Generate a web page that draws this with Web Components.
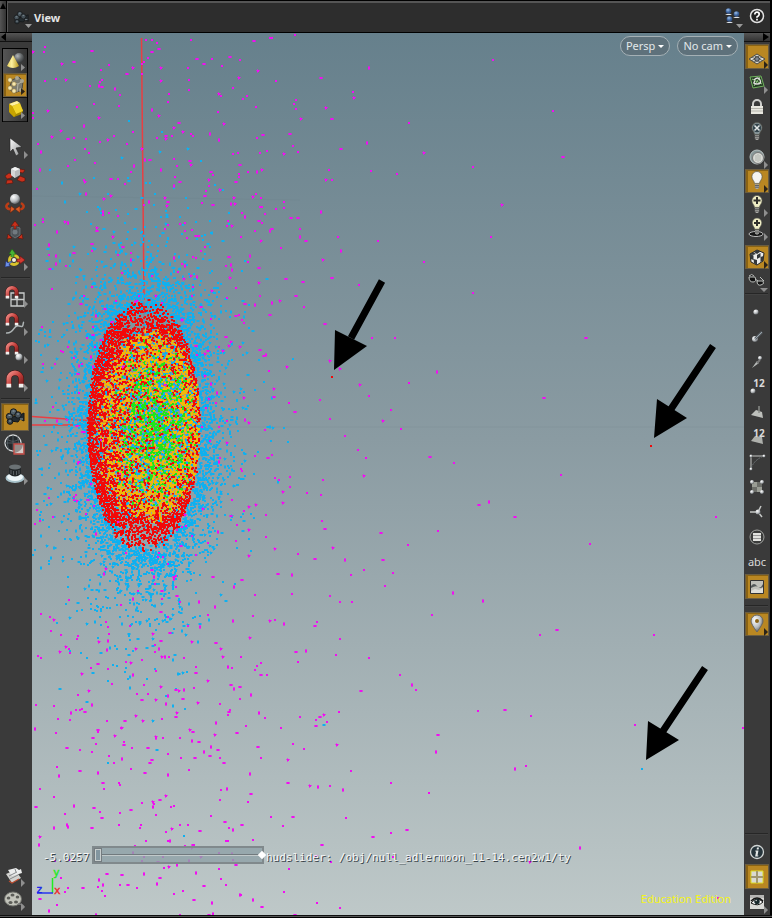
<!DOCTYPE html>
<html lang="en">
<head>
<meta charset="utf-8">
<title>Scene View</title>
<style>
html,body{margin:0;height:100%;background:#000}
body{font-family:"Noto Sans","Open Sans",sans-serif;overflow:hidden}
</style>
</head>
<body>
<scene-pane></scene-pane>
<script>
const DEFS = `<defs>
<radialGradient id="ball" cx=".35" cy=".3" r=".8"><stop offset="0" stop-color="#fff"/><stop offset=".55" stop-color="#b9bdc0"/><stop offset="1" stop-color="#45484b"/></radialGradient>
<radialGradient id="dark" cx=".35" cy=".3" r=".8"><stop offset="0" stop-color="#b0b4b6"/><stop offset=".5" stop-color="#65696b"/><stop offset="1" stop-color="#2b2e30"/></radialGradient>
<radialGradient id="blue" cx=".4" cy=".3" r=".8"><stop offset="0" stop-color="#9fc0e8"/><stop offset=".5" stop-color="#3f66a0"/><stop offset="1" stop-color="#1d3768"/></radialGradient>
<linearGradient id="gold"><stop offset="0" stop-color="#e6cf5a"/><stop offset=".4" stop-color="#fdf0a0"/><stop offset="1" stop-color="#b99718"/></linearGradient>
<linearGradient id="steel" x2="1" y2="1"><stop offset="0" stop-color="#fff"/><stop offset="1" stop-color="#8b8d8e"/></linearGradient>
<linearGradient id="mag" x2="1" y2="1"><stop offset="0" stop-color="#ef8a84"/><stop offset=".5" stop-color="#c5403c"/><stop offset="1" stop-color="#7d1c1b"/></linearGradient>
</defs>`;
const magnet = (x, y, s) => `<g transform="translate(${x} ${y}) scale(${s})"><path d="M-6.500 6V-1a6.500 6.500 0 0 1 13 0V6" fill="none" stroke="#3a0f0e" stroke-width="6"/><path d="M-6.500 6V-1a6.500 6.500 0 0 1 13 0V6" fill="none" stroke="url(#mag)" stroke-width="5"/><path d="M-9 4h5v4h-5zM4 4h5v4h-5z" fill="#f0f0ee"/></g>`;
const camera = `<g stroke="#14181a" stroke-width="1"><path d="M-3 0l5-1 3-1 4-2v8l-4-2-2 3-7-1z" fill="#232b30"/><circle cx="-5.500" cy="-.5" r="3.200" fill="#4b5860"/><circle cx="-1.500" cy="-5" r="3.200" fill="#526069"/><circle cx="3" cy="-2" r="3.200" fill="#46525a"/><circle cx="-5" cy="4.500" r="2.800" fill="#39454d"/></g><path d="M-6.500-1.500h2M-2.500-6h2M2-3h2M5 2h3M-6 4h2" stroke="#93a1aa"/>`;
const bulb = (x, y, s, fill = '#f4f4f0') => `<g transform="translate(${x} ${y}) scale(${s})"><path d="M-3 4C-3 1-6 0-6-4a6 6 0 0 1 12 0c0 4-3 5-3 8z" fill="${fill}" stroke="#55554d" stroke-width=".8"/><path d="M-2.500 5h5v4l-1.500 1.500h-2L-2.500 9z" fill="#a9a9a5"/><path d="M-2.500 6.500h5M-2.500 8.500h5" stroke="#555"/></g>`;
const redArrows = `<g fill="#c9301b" stroke="#54150d" stroke-width=".6">`;
const dot = (x, y, r = 2) => `<circle cx="${x}" cy="${y}" r="${r}" fill="url(#ball)"/>`;
const ICONS = {
 objects: `<circle cx="4" cy="-3" r="5" fill="url(#dark)"/><path d="M-2-6L4 5Q-2 9-8 5z" fill="url(#gold)"/>`,
 points: `<path d="M-3-5L4-8 8-4 7 5-1 8-6 4z" fill="#7d7c70" stroke="#4c4b45"/><path d="M-3-3l6 2 5-3M3-1l-1 8" stroke="#b4b3a4" fill="none"/><g fill="#f5e7ae" stroke="#8d7437" stroke-width=".6"><circle cx="-5" cy="-5" r="2.200"/><circle cx="-1" cy="-1" r="2.200"/><circle cx="-5" cy="3" r="2.200"/><circle cx="-1" cy="6" r="2.200"/></g><g fill="#aaa692"><circle cx="2" cy="-7" r="2"/><circle cx="7" cy="-4" r="2"/><circle cx="6" cy="5" r="2"/></g>`,
 prims: `<path d="M-6-5L2-8 8 1 7 5-1 8-5 4z" fill="#a68a00"/><path d="M-3-3l8-3 3 8-7 3z" fill="#f2d52a"/><path d="M-6-5L2-8l3 2-8 3z" fill="#fff2a0"/><path d="M-6-5l3 2 4 8-2 3-5-5z" fill="#c8a400"/>`,
 select: `<path d="M-5-9V5l3-3 3 7 3-2-3-6 6-1z" fill="url(#steel)" stroke="#222" stroke-width=".6"/>`,
 move: redArrows + `<path d="M-10 1l4-3 4 2-2 3-4 1zM10-5L5-6 3-3l5 1zM-8 5l-1 4 7-1-1-3zM10 3L5 1 2 5l5 2 3-1z"/></g><path d="M-4-6l4-2 5 2v6L0 3l-4-3z" fill="#b8babc"/><path d="M-4-6l4-2 5 2-5 2z" fill="#f2f3f3"/><path d="M0-4v7l-4-3v-6z" fill="#d3d5d6"/>`,
 rotate: `<path d="M-6 0c-5 3-2 7 3 6M6 0c5 3 2 7-2 6" fill="none" stroke="#bd3d16" stroke-width="2.500"/><path d="M-4 3l4 3-5 4zM5 3L0 6l5 4z" fill="#d95b24" stroke="#58180b" stroke-width=".5"/><circle cy="-4" r="5" fill="url(#ball)"/>`,
 scale: `<path d="M-4-3l4-2 5 2v7L0 7l-4-3z" fill="#4d5358" stroke="#777d81" stroke-width=".7"/><circle cy="1" r="2.500" fill="#727a80"/>` + redArrows + `<path d="M0-10l4 5H1v3h-2v-3h-3zM-8 8l1-5 4 4zM8 8L7 3 3 7z"/></g>`,
 pose: `<circle cx="-1" cy="1" r="4.500" fill="none" stroke="#d9c32b" stroke-width="3"/><circle cx="-1" cy="1" r="2" fill="#f2efe0"/><path d="M-4-2v-3h-2l3-5 4 5h-2v3" fill="#49b435" stroke="#1c5a13" stroke-width=".6"/><path d="M2 0h3v-3l5 4-5 4V3H2z" fill="#d33a31" stroke="#611" stroke-width=".6"/><path d="M-3 3l-3 2 1 2-5 1 1-6 2 2 3-2z" fill="#6c90e8" stroke="#237" stroke-width=".6"/>`,
 snapgrid: `<path d="M-4-3H9V10H-4zM2-3v13M-4 3.500H9" fill="none" stroke="#c9cccb" stroke-width="1.300"/>` + magnet(-3, -3, .7),
 snapcurve: `<path d="M-9 9C0 10-2 0 4 2S7-1 9-2" fill="none" stroke="#aeb4b5" stroke-width="1.500"/>` + magnet(-3, -4, .7),
 snappoint: magnet(-3, -3, .7) + dot(4, 5, 3.500),
 snap: magnet(0, 0, .95),
 camera: camera,
 wireball: `<circle cx="-2" cy="-2" r="8" fill="#23282b" stroke="#d5d8d9" stroke-width="1.300"/><path d="M-10-2H6M-2-10V6M-8-6c4 3 8 3 12 0M-6-9c-2 5-2 9 0 14M2-9c2 5 2 9 0 14" fill="none" stroke="#596268" stroke-width=".8"/><path d="M-1-1h10V9H-1z" fill="#958d8a" stroke="#c84d48" stroke-width="1.300"/><path d="M8 0v8H0q7-2 8-8z" fill="#d5cbc8"/>`,
 lens: `<ellipse cy="5" rx="9.500" ry="5" fill="#a9c3cb"/><ellipse cy="4" rx="8" ry="4" fill="#eef6f8"/><path d="M-6-6V1q6 5 12 0v-7z" fill="#222729"/><ellipse cy="-6" rx="6" ry="2.500" fill="#6b7275"/><path d="M-4-3v4M-1.500-2v4M1.500-2v4M4-3v4" stroke="#565d60"/>`,
 render: `<path d="M-8-1L1-5 7 3-2 8z" fill="#d2d2cf"/><path d="M-6-5L2-7l3 2 2-1 1 4-10 3z" fill="#eceded"/><path d="M-5 1L3-3M-4 4l8-4M1-6l1 3" stroke="#85888a"/><path d="M-5 6l3 2 7-4" stroke="#b94c30" stroke-width="1.200" fill="none"/>`,
 reel: `<ellipse cx="-1" cy="0" rx="8.500" ry="7" fill="#c3c4bb" stroke="#6e6f6a"/><g fill="#5c5d58"><ellipse cx="-5.500" cy="-1" rx="1.800" ry="1.500"/><ellipse cx="-1.500" cy="-4" rx="2" ry="1.500"/><ellipse cx="3.500" cy="-2" rx="1.800" ry="1.500"/><ellipse cx="2" cy="3" rx="2" ry="1.500"/><ellipse cx="-3.500" cy="3.500" rx="2" ry="1.500"/></g><path d="M4 5q5 0 6 3" stroke="#777" stroke-width="1.500" fill="none"/>`,
 plane: `<path d="M-8 2L0-3 8 2 0 7z" fill="#dad9cf" stroke="#4c4b45"/><path d="M-5 0L3 5M-3-1.500L5 3.500M5 0L-3 5M3-1.500L-5 3.500" stroke="#4d5356" stroke-width=".8"/><circle cy="2" r="2.300" fill="#7f8993" stroke="#333"/>`,
 green: `<path d="M-7-5L4-6 7 4-4 6z" fill="#253a24" stroke="#70b35e"/><path d="M-5-3L5 2M3-5l-6 9" stroke="#8cc47b"/><path d="M-3-2q4-4 6 0t-3 4-2-3" fill="none" stroke="#dedfdc" stroke-width="1.400"/>`,
 lock: `<path d="M-4 0v-3a4 4 0 0 1 8 0v3" fill="none" stroke="#cfcfcc" stroke-width="2"/><path d="M-6-1H6V7H-6z" fill="#e8e7df"/><path d="M-6 1.500H6M-6 4H6" stroke="#b5b4ac"/>`,
 nolight: bulb(0, -1, .85, '#8b999d') + `<circle cy="-4" r="4.200" fill="#35454c"/><path d="M-2.500-6.500l5 5M2.500-6.500l-5 5" stroke="#e4e8e8" stroke-width="1.500"/>`,
 headlight: `<circle r="7" fill="#879697" stroke="#b9c2c2"/><circle cx="1" cy="1" r="5.500" fill="#d7d9d4" stroke="#777"/><path d="M-1-2v6M1-3v8M3-2v6" stroke="#b1b4ae"/>`,
 light: bulb(0, -1, .85),
 hqlight: bulb(0, -1, .85, '#efedc5') + `<path d="M0-8v7M-3.500-4.500h7" stroke="#30302c" stroke-width="2"/>`,
 shadow: `<ellipse cx="-1" cy="5" rx="7" ry="2.500" fill="#171717" stroke="#bbb"/>` + bulb(0, -3, .8, '#efedc5') + `<path d="M0-9v6M-3-6h6" stroke="#30302c" stroke-width="2"/>`,
 texture: `<path d="M-7-3L0-7 7-4 6 4 0 8-6 5z" fill="#ededeb" stroke="#222"/><path d="M-7-3l3-2 3 2-3 1zM0-7l3.500 1.500L0-3l-3-2zM-7-3l3.500 1.500V3l-3-1zM-3.500 2L0 3v5l-3-2zM0-2l3.500-2v4L0 2zM3.500 0L6.500-1 6 4 3.500 5z" fill="#33373a"/>`,
 glasses: `<path d="M-8-5q3-3 5 0M-8-4q0 5 4 5t2-5zM0 0q0 5 4 4t2-4zM-2-2l3 2M7 0L3-4" fill="#111" stroke="#bcbfbc"/>`,
 pt: dot(-1, 0, 2.600),
 normal: dot(-2, 2, 3) + `<path d="M-2 2L5-5" stroke="#596066" stroke-width="2.500"/><path d="M-2 2L5-5" stroke="#9aa4aa"/>`,
 vector: `<path d="M-5 6L0-1l2 2z" fill="#b7bbb9"/><path d="M0 1l3-3" stroke="#777" stroke-width="2"/>` + dot(3, -4, 2),
 ptnum: dot(-4, 4, 2.500),
 primnormal: `<path d="M-6 3L-1-2 5 0 6 6z" fill="#bdbfbb"/><path d="M2 1v-7" fill="none" stroke="#8a8c89" stroke-width="1.500"/>`,
 primnum: `<path d="M-6 4L-2-1 5 0 6 7z" fill="#aeb0ac"/>`,
 hull: `<path d="M-6-6V7M-6-6H7" stroke="#c3c5c2" fill="none"/><path d="M-6 6Q-2-3 7-6" stroke="#6e7578" fill="none" stroke-dasharray="2 1"/>` + dot(-6, -6, 1.500) + dot(7, -6, 1.500) + dot(-6, 7, 1.500),
 uv: `<path d="M-5-5H5V5H-5z" fill="#6c6e69"/><path d="M-5-5h5V5h5V0H-5z" fill="#9a9d95"/>` + dot(-5, -5, 2) + dot(5, -5, 2) + dot(-5, 5, 2) + dot(5, 5, 2),
 axes: `<path d="M1 0l3-6M1 0l4 5M1 0h-8" stroke="#c5c7c5" stroke-width="1.500"/>` + dot(1, 0, 2.500),
 list: `<circle r="7" fill="#3b3c3b" stroke="#a0a29f"/><path d="M-4-4h8v8h-8z" fill="#e2e3df"/><path d="M-4-1.500h8M-4 1.500h8" stroke="#999"/>`,
 abc: ``,
 image: `<path d="M-6.500-6.500h13v13h-13z" fill="#bfc0ba" stroke="#333"/><path d="M-6-1q3-4 6 0t6-2v3q-3 2-5 0t-7 1z" fill="#54595a"/><path d="M-6 4l4-2 4 1 4-2v5H-6z" fill="#deded8"/>`,
 pin: `<path d="M0 8Q-6 0-6-3a6 6 0 0 1 12 0Q6 0 0 8z" fill="url(#ball)" stroke="#666"/><circle cy="-3" r="2" fill="#8d6518"/>`,
 info: `<circle r="6.500" fill="#26343b" stroke="#d2d6d5" stroke-width="1.300"/><path d="M0-4.500h2l-.4 2h-2zM-1.500-1.500h3l-1 5h1l-.4 1h-3l1-5h-1z" fill="#e4e7e6"/>`,
 panes: `<path d="M-6-6H6V6H-6z" fill="#d9dad3" stroke="#dcdc25"/><path d="M0-6V6M-6 0H6" stroke="#a09872" stroke-width="2"/>`,
 eye: `<path d="M-7-7H7V7H-7z" fill="#d9d9d6"/><path d="M-7-7H7v3H-7z" fill="#b5b5b3"/><path d="M-6 1Q0-6 6 0 1 5-6 1z" fill="#fff" stroke="#151515"/><path d="M-6-1Q0-7 6-1" fill="none" stroke="#151515" stroke-width="1.500"/><circle cy="-.5" r="2.700" fill="#17282b"/><circle cx="-.8" cy="-1.500" r=".8" fill="#ccc"/>`
};

class ToolButton extends HTMLElement {
 connectedCallback() {
  const icon = this.getAttribute('icon'), half = +(this.getAttribute('size') || 24) / 2;
  const narrow = half === 12, menu = this.getAttribute('menu');
  const on = this.hasAttribute('active');
  const grey = on ? '#2c2418' : '#8f8f8f';
  const fly = menu === 'down' ? `<path d="M3 7h8l-4 4z" fill="${grey}"/>` :
   menu === 'in' ? `<path d="M6 3l4 3.500L6 10z" fill="${grey}"/>` :
   menu !== null ? `<path d="M${narrow ? 7 : 9} 4l4 4-4 4z" fill="${grey}"/>` : '';
  const root = this.attachShadow({mode: 'open'});
  root.innerHTML = `<style>
  :host{display:block;flex:none;height:var(--h,24px);width:24px}
  :host([size="28"]){width:28px;height:28px}
  :host([tall]){--h:25px}
  button{display:grid;place-items:center;box-sizing:border-box;position:relative;width:100%;height:100%;margin:0;padding:0;border:0;background:none;color:#d9d9d9;font:11px/12px "Noto Sans","Open Sans",sans-serif}
  :host([active]) button{background:#b98722;border:1px solid #6b5d40;box-shadow:inset 2px 1px #8a6314}
  svg{overflow:visible;grid-area:1/1}
  span{grid-area:1/1}
  .num{align-self:start;justify-self:center;font-weight:bold;font-size:10px;padding:3px 0 0 4px}
  </style><button type="button" aria-label="${this.getAttribute('label') || icon}"><svg width="22" height="22" viewBox="-11 -11 22 22" aria-hidden="true">${DEFS}${ICONS[icon]}${fly}</svg>${this.hasAttribute('text') ? `<span class="${icon === 'abc' ? '' : 'num'}">${this.getAttribute('text')}</span>` : ''}</button>`;
 }
}
customElements.define('tool-button', ToolButton);

class ToolStrip extends HTMLElement {
 constructor() {
  super();
  this.attachShadow({mode: 'open'}).innerHTML = `<style>
  :host{display:flex;flex-direction:column;box-sizing:border-box;min-height:0;background:#3a3a3a}
  .grip{flex:none;height:9px;display:flex;align-items:center;background:linear-gradient(#555,#333);border-bottom:1px solid #111;box-sizing:border-box}
  .grip i{border:4px solid transparent;width:0;height:0}
  :host([side=left]) .grip i{border-right:5px solid #000;border-left:0;margin-left:1px}
  :host([side=right]) .grip{justify-content:flex-end;margin-bottom:2px}
  :host([side=right]) .grip i{border-left:6px solid #000;border-right:0;margin-right:1px}
  :host([side=left]) .body{padding-left:1px}
  :host([side=right]) .body{padding-left:1px}
  :host([side=right]){border-right:2px solid #000}
  .body{flex:1;display:flex;flex-direction:column}
  </style><div class="grip"><i></i></div><div class="body"><slot></slot></div>`;
 }
}
customElements.define('tool-strip', ToolStrip);

class ToolRule extends HTMLElement {
 constructor() {
  super();
  this.attachShadow({mode: 'open'}).innerHTML = `<style>:host{display:flex;flex:none;align-items:center;height:9px;margin-right:2px}:host([short]){height:6px;align-items:flex-start}:host([long]){height:13px}hr{flex:1;margin:0;border:0;border-top:1px solid #262626;border-bottom:1px solid #424242}</style><hr>`;
 }
}
customElements.define('tool-rule', ToolRule);

class ToolGroup extends HTMLElement {
 constructor() {
  super();
  this.attachShadow({mode: 'open'}).innerHTML = `<style>:host{display:block;width:24px;margin:6px 0 11px 1px;border:1px solid #000;background:linear-gradient(90deg,#555,#333)}::slotted(*){box-shadow:0 1px #111}</style><slot></slot>`;
 }
}
customElements.define('tool-group', ToolGroup);

class PaneHeader extends HTMLElement {
 constructor() {
  super();
  this.attachShadow({mode: 'open'}).innerHTML = `<style>
  :host{display:flex;box-sizing:border-box;height:33px;border-top:1px solid #000;border-bottom:1px solid #000;border-right:2px solid #000;background:#2d2d2d;box-shadow:inset 0 2px #555}
  .grip{width:7px;flex:none;box-sizing:border-box;border-right:1px solid #000;background:linear-gradient(90deg,#555,#333)}
  .grip i{display:block;margin-top:2px;border:3px solid transparent;border-top:0;border-bottom:6px solid #000}
  .bar{flex:1;display:flex;align-items:center;border-left:1px solid #555;padding:2px 5px 0 3px}
  button{display:flex;align-items:center;border:0;padding:0;margin:0;background:none;color:#e4e4e4;font:bold 11px/16px "Noto Sans","Open Sans",sans-serif}
  .end{margin-left:auto;gap:5px;display:flex}
  .end button{align-self:start;margin-bottom:4px}
  svg{overflow:visible}
  </style><div class="grip"><i></i></div><div class="bar">
  <button type="button"><svg width="23" height="24" viewBox="-10 -12 23 24" aria-hidden="true">${DEFS}<g transform="scale(.8)" opacity=".9">${camera}</g><path d="M4 6h7L7.500 10z" fill="#999"/></svg><span>View</span></button>
  <div class="end"><button type="button" aria-label="Linked panes"><svg width="20" height="20" viewBox="-10 -10 20 20">${DEFS}<g fill="#e2e5e8"><path d="M-9-1q4-3 7 0zM-1 2q4-3 7 0zM-8 7q4-3 7 0z"/></g><g fill="url(#blue)"><circle cx="-5.500" cy="-5" r="2.800"/><circle cx="2.500" cy="-2" r="2.800"/><circle cx="-4.500" cy="3" r="2.800"/></g><path d="M2 8h7L5.500 12z" fill="#999"/></svg></button>
  <button type="button" aria-label="Help"><svg width="16" height="20" viewBox="-8 -10 16 20"><circle r="6.500" fill="#222" stroke="#e2e2e2" stroke-width="1.500"/><path d="M-2.200-1.500q0-2.300 2.200-2.300t2.200 2Q2.200-.6 0 1v.7M0 2.800v1.600" fill="none" stroke="#fff" stroke-width="1.700"/></svg></button></div></div>`;
 }
}
customElements.define('pane-header', PaneHeader);

class MenuPill extends HTMLElement {
 constructor() {
  super();
  this.attachShadow({mode: 'open'}).innerHTML = `<style>:host{display:block}
  button{display:flex;align-items:center;gap:3px;box-sizing:border-box;height:20px;margin:0;padding:0 5px;border:1px solid #a4b0b5;border-radius:10px;background:#5e717b;color:#e3e8ea;font:11px/16px "Noto Sans","Open Sans",sans-serif}
  i{border:3px solid transparent;border-top-color:#fff;border-bottom:0}</style><button type="button"><slot></slot><i></i></button>`;
 }
}
customElements.define('menu-pill', MenuPill);

/* Hand-placed outliers, at three units per pixel from the view's corner. */
const TOP = `342 17 360 17 375 27 380 45 360 54 348 73 336 84 330 91 478 17 667 21 714 13 720 11 790 3 39 38 36 54 4 53 181 51 127 84 90 91 230 93 302 102 207 108 286 121 329 121 386 101 467 101 495 76 516 89 540 75 570 97 595 69 624 78 677 110 620 133 731 141 1010 102 868 132 39 141 72 136 102 138 211 139 204 144 175 157 202 157 209 159 248 166 264 183 386 141 471 138 471 168 604 161 561 179 567 186 411 180 407 204 644 186 634 196 672 219 963 175 965 191 793 197 786 209 793 225 807 255 883 222 901 255 135 219 186 209 261 216 49 232 3 236 2 252 202 253 359 229 380 246 559 234 576 271 440 267 426 282 454 295 477 301 482 306 533 301 561 319 375 312 402 307 402 315 420 307 156 276 87 291 61 309 109 316 126 313 162 315 203 324 229 318 246 307 302 294 286 330 329 345 19 329 27 353 159 344 172 358 128 378 188 388 108 396 24 408 338 378 354 378 306 396 297 415 387 408 425 376 435 396 474 382 477 394 603 361 618 357 675 312 693 303 684 357 706 352 756 360 774 301 784 336 799 353 928 345 1006 327 892 409 882 438 900 438 1017 411 624 394 648 414 622 420 621 430 612 444 676 413 690 409 537 415 543 423 532 438 531 455 521 472 518 486 563 467 428 430 444 444 427 456 238 434 259 435 278 450 157 438 159 443 16 464 162 480 217 495 237 487 399 491 408 503 405 516 350 503 335 514 510 506 542 513 606 493 609 510 597 511 663 489 671 480 688 492 690 518 684 519 757 505 756 521 733 525 699 540 630 537 639 550 589 560 601 575 585 577 681 560 689 567 777 552 798 553 868 535 805 585 805 609 822 622 917 609 927 650 1038 622 873 677 899 731 980 754 814 743 762 736 747 642 688 622 670 592 715 590 721 586 626 609 654 667 649 683 680 703 681 747 591 669 597 693 600 708 583 696 594 732 612 762 214 534 214 543 232 536 257 546 194 582 194 591 244 608 34 555 33 563 1 566 10 572 98 563 109 568 74 593 50 633 52 663 71 666 71 691 55 704 102 697 181 630 181 652 126 657 273 639 298 657 258 663 297 678 271 717 361 725 398 585 409 573 444 570 459 567 458 590 481 588 465 612 492 605 501 607 519 639 507 651 482 669 491 672 426 672 449 691 460 696 437 714 456 735 477 726 495 729 482 758 539 772 180 759 60 765`;
const FAR = `493 60 409 123 397 174 424 153 473 167 502 205 491 237 424 262 586 338 395 338 409 383 473 293 437 372 544 398 391 410 401 429 383 421 430 457 454 463 561 475 489 502 479 505 515 517 590 544 716 517 438 531 381 533 408 545 383 560 393 573 385 586 453 593 432 615 483 601 557 630 540 635 654 635 400 675 412 685 416 690 438 735 436 752 505 710 531 716 478 711 526 766 515 769 635 725 743 728 429 793 391 783 407 830 391 833 373 837 580 848 718 898 393 857 410 857 530 862 553 111 563 157 350 350 372 338 369 396 345 436 320 400 358 450 364 476 333 548 351 575 340 602 369 658 361 691 324 715 337 745 351 771 330 786`;

class PointCloud extends HTMLElement {
 connectedCallback() {
  let seed = 90210;
  const rnd = () => { seed = seed + 0x6D2B79F5 | 0; let t = Math.imul(seed ^ seed >>> 15, 1 | seed); t = t + Math.imul(t ^ t >>> 7, 61 | t) ^ t; return ((t ^ t >>> 14) >>> 0) / 4294967296; };
  const gauss = () => Math.sqrt(-2 * Math.log(rnd() + 1e-9)) * Math.cos(6.2832 * rnd());
  const C = {r: '#f20808', y: '#f0b80a', g: '#1fe61a', b: '#0fb0f0', m: '#f20df2'};
  /* Each splat is a solid 2px core with fainter 1px arms on some of them. */
  class Layer {
   constructor(fill, soft = .5) { this.fill = fill; this.soft = soft; this.core = ''; this.arms = ''; }
   add(x, y, arms = .5) {
    x = Math.round(x); y = Math.round(y);
    if (x < 32) return;
    this.core += `M${x} ${y}h2v2h-2z`;
    const p = rnd() / arms;
    if (p < .4) this.arms += `M${x - 1} ${y}h4v2h-4z`;
    else if (p < .7) this.arms += `M${x} ${y - 1}h2v4h-2z`;
    else if (p < 1) this.arms += `M${x - 1} ${y}h4v1h-4zM${x} ${y - 1}h1v4h-1z`;
   }
   get svg() { return `<path fill="${this.fill}" opacity="${this.soft}" d="${this.arms}"/><path fill="${this.fill}" d="${this.core}"/>`; }
  }
  let out = '';
  const blue = new Layer(C.b);
  for (let i = 0; i < 3100; i++) {
   const a = rnd() * 6.2832, r = .98 - Math.log(rnd() + 1e-3) * .24;
   blue.add(145 + Math.cos(a) * 57 * r + gauss() * 3, 428 + Math.sin(a) * 124 * r + gauss() * 4, .4);
  }
  for (let i = 0; i < 420; i++) blue.add(140 + gauss() * 52, 435 + gauss() * 125, .4);
  out += blue.svg;
  const used = new Set();
  const free = (x, y) => {
   x = Math.round(x); y = Math.round(y);
   const cells = [[0, 0], [1, 0], [0, 1], [1, 1]].map(([i, j]) => (y + j) * 1000 + x + i);
   if (cells.filter(c => used.has(c)).length > 1) return false;
   cells.forEach(c => used.add(c));
   return true;
  };
  for (let pass = 0; pass < 12; pass++) {
   const layer = {r: new Layer(C.r, .45), y: new Layer(C.y, .45), g: new Layer(C.g, .45), b: new Layer(C.b, .45)};
   for (let i = 0; i < 1700; i++) {
    const a = rnd() * 6.2832, q = Math.sqrt(rnd());
    const x = 143 + Math.cos(a) * 56 * q, y = 425 + Math.sin(a) * 125 * q + gauss() * 2;
    if (Math.abs(y - 425) > 96 && rnd() < Math.min(.94, .55 + (Math.abs(y - 425) - 96) / 80)) continue;
    if (!free(x, y)) continue;
    const inner = Math.hypot((x - 148) / 52, (y - 425) / 92);
    const core = Math.hypot((x - 155) / 50, (y - 425) / 90);
    const p = rnd();
    let k = 'r';
    if (inner < 1 + gauss() * .06) {
     const g = Math.max(0, 1 - core) * .6, b = .07 + Math.max(0, 1 - core) * .16;
     const red = .32 + Math.max(0, (145 - x) / 50) * .35;
     k = p < g ? 'g' : p < g + b ? 'b' : p < g + b + red * (1 - g - b) ? 'r' : 'y';
    } else if (p < .03) k = 'b';
    layer[k].add(x, y, .2);
   }
   for (const k in layer) out += layer[k].svg;
  }
  const mag = new Layer(C.m, .6);
  const pairs = (s, f) => { const n = s.split(' ').map(Number); for (let i = 0; i < n.length; i += 2) f(n[i], n[i + 1]); };
  pairs(TOP, (x, y) => mag.add(31 + x / 3, 33 + y / 3));
  pairs(FAR, (x, y) => mag.add(x - 1, y - 1));
  for (let i = 0; i < 640; i++) {
   const x = 160 + gauss() * 100, y = 294 + rnd() * 620;
   if (x < 370 && x > 32 && (Math.hypot((x - 143) / 57, (y - 425) / 124) > 1 || rnd() < .1)) mag.add(x, y);
  }
  out += mag.svg + `<path fill="${C.r}" d="M331 376h2v2h-2zM650 445h2v2h-2z"/><path fill="${C.b}" d="M641 768h2v2h-2z"/>`;
  this.attachShadow({mode: 'open'}).innerHTML = `<style>:host{display:block;overflow:hidden}svg{display:block;width:100%;height:100%}</style>
  <svg role="img" aria-label="Particle cloud"><g transform="translate(-32 -33)">
  <path d="M32 196L300 200M32 427L744 427" stroke="#61747c" opacity=".12"/>
  <g stroke="#e93f42" stroke-width="1.500"><path d="M141.500 38L144 300M32 416.500L87 420.500M32 425H87"/></g>
  <g shape-rendering="crispEdges">${out}</g>
  <path d="M144 302V336M87 421L130 424" stroke="#c85050" opacity=".5"/>
  <path d="M382 281L351 338M713 346L671 409M705 668L663 731" stroke="#000" stroke-width="7"/>
  <path d="M334 370L335 330 367 346zM654 438L657 399 687 418zM646 760L648 721 679 740z"/>
  </g></svg>`;
 }
}
customElements.define('point-cloud', PointCloud);

class HudSlider extends HTMLElement {
 constructor() {
  super();
  this.attachShadow({mode: 'open'}).innerHTML = `<style>
  :host{display:flex;align-items:center;height:18px;color:#f5f7f7;font:11px/16px "DejaVu Sans Mono","Liberation Mono",monospace;text-shadow:1px 1px #39434a}
  output{width:48px;margin-right:1px;padding-top:5px}
  label{padding-top:5px;white-space:pre}
  .track{position:relative;width:172px;height:18px;margin-right:2px}
  input{appearance:none;box-sizing:border-box;display:block;width:100%;height:18px;margin:0;padding:0 1px;border:2px solid #80898c;background:linear-gradient(#717a7e,#717a7e) 0 6px/100% 1px no-repeat,linear-gradient(#c1c9ca,#c1c9ca) 0 7px/100% 1px no-repeat,#8fa1a8cc}
  input::-webkit-slider-thumb{appearance:none;box-sizing:border-box;width:6px;height:12px;border:1px solid #c7cece;outline:1px solid #747c80;background:#8296a0;border-radius:0}
  .track i{position:absolute;right:-1px;top:6px;width:6px;height:6px;background:#fff;transform:rotate(45deg)}
  </style><output for="ty">-5.0257</output><div class="track"><input id="ty" type="range" min="0" max="100" value="0"><i></i></div><label for="ty"><slot></slot></label>`;
 }
}
customElements.define('hud-slider', HudSlider);

class SceneViewport extends HTMLElement {
 constructor() {
  super();
  this.attachShadow({mode: 'open'}).innerHTML = `<style>
  :host{display:grid;position:relative;min-width:0;min-height:0;overflow:hidden;background:linear-gradient(#66808c,#8a9ba2 46%,#bec8c8)}
  point-cloud{min-width:0;min-height:0}
  .menus{position:absolute;right:6px;top:3px;display:flex;gap:7px}
  hud-slider{position:absolute;left:11px;bottom:51px}
  .axis{position:absolute;left:3px;bottom:16px}
  .edition{position:absolute;right:13px;bottom:8px;color:#f4f418;font-size:11px;line-height:16px}
  </style><point-cloud></point-cloud>
  <div class="menus"><menu-pill>Persp</menu-pill><menu-pill>No cam</menu-pill></div>
  <hud-slider>hudslider: /obj/null_adlermoon_11-14.cen2w1/ty</hud-slider>
  <svg class="axis" width="28" height="32" font-family="DejaVu Sans Mono" font-size="11"><path d="M17.500 11V26" stroke="#1fee1f" stroke-width="1.500"/><path d="M2 26H18" stroke="#2a35ee" stroke-width="1.500"/><text x="18" y="9" fill="#1fe81f" stroke="#1fe81f" stroke-width=".4">y</text><text x="1" y="26" fill="#1a25ee" stroke="#1a25ee" stroke-width=".4">z</text><text x="19" y="27" fill="#ee2525" stroke="#ee2525" stroke-width=".4">x</text></svg>
  <div class="edition">Education Edition</div>`;
 }
}
customElements.define('scene-viewport', SceneViewport);

class ScenePane extends HTMLElement {
 constructor() {
  super();
  const b = (icon, extra = '') => `<tool-button icon="${icon}" ${extra}></tool-button>`;
  this.attachShadow({mode: 'open'}).innerHTML = `<style>
  :host{display:grid;height:100vh;grid-template:33px minmax(0,1fr) 3px/32px minmax(0,1fr) 28px}
  pane-header,.foot{grid-column:1/-1}
  .foot{background:#555;border-top:1px solid #111;border-bottom:1px solid #000;box-sizing:border-box}
  .end{margin-top:auto;display:flex;flex-direction:column}
  .left{padding:0 0 4px 1px}.right{padding-bottom:1px}
  .gap{height:4px;flex:none}
  </style><pane-header></pane-header>
  <tool-strip side="left"><tool-group>${b('objects', 'menu="in"')}${b('points', 'active menu="in"')}${b('prims', 'menu="in"')}</tool-group>
  ${b('select', 'size="28" menu')}${['move', 'rotate', 'scale'].map(n => b(n, 'size="28"')).join('')}${b('pose', 'size="28" menu')}<tool-rule></tool-rule>
  ${['snapgrid', 'snapcurve', 'snappoint', 'snap'].map(n => b(n, 'size="28" menu')).join('')}<tool-rule></tool-rule>
  ${b('camera', 'size="28" active')}${b('wireball', 'size="28"')}${b('lens', 'size="28" menu')}
  <div class="end left">${b('render', 'menu')}${b('reel', 'menu')}</div></tool-strip>
  <scene-viewport></scene-viewport>
  <tool-strip side="right">${b('plane', 'tall active menu')}${b('green', 'tall menu')}${b('lock', 'tall')}${b('nolight', 'tall')}${b('headlight', 'tall menu')}${b('light', 'active menu')}${b('hqlight', 'menu')}${b('shadow', 'menu')}<div class="gap"></div>${b('texture', 'active menu')}${b('glasses', 'menu="down"')}<tool-rule short></tool-rule>
  ${b('pt', 'tall')}${b('normal', 'tall')}${b('vector', 'tall')}${b('ptnum', 'tall text="12"')}${b('primnormal', 'tall')}${b('primnum', 'tall text="12"')}${b('hull', 'tall')}${b('uv', 'tall')}${b('axes', 'tall')}${b('list', 'tall')}${b('abc', 'tall text="abc"')}${b('image', 'tall active')}<tool-rule long></tool-rule>${b('pin', 'active menu')}
  <div class="end right"><tool-rule short></tool-rule>${b('info', 'tall')}${b('panes', 'tall active')}${b('eye', 'tall menu')}</div></tool-strip>
  <div class="foot"></div>`;
 }
}
customElements.define('scene-pane', ScenePane);
</script>
</body>
</html>
